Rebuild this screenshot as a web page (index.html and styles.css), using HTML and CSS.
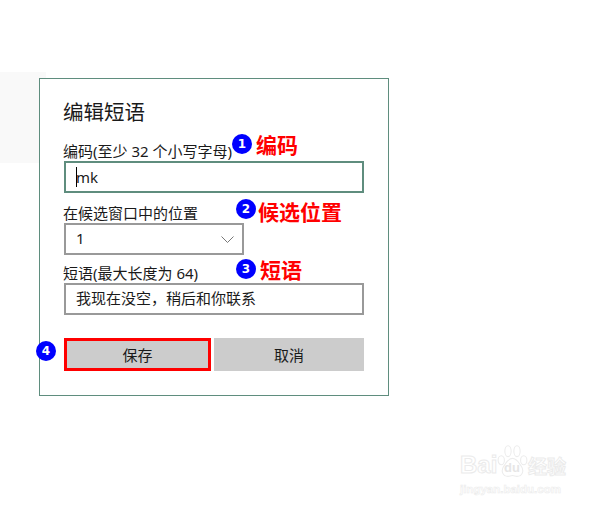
FILE: index.html
```html
<!DOCTYPE html>
<html lang="zh-CN">
<head>
  <meta charset="UTF-8" />
  <title>编辑短语</title>
  <link rel="stylesheet" href="styles.css">
</head>
<body>
  <div class="side-pane"></div>

  <div class="dialog">
    <h1 class="title">编辑短语</h1>

    <label class="label label-code">编码(至少 32 个小写字母)</label>
    <div class="field field-focus"><span class="caret"></span>mk</div>

    <label class="label label-pos">在候选窗口中的位置</label>
    <div class="field select">
      <span>1</span>
      <svg class="chevron" width="13" height="7" viewBox="0 0 13 7"><path d="M0.5 0.5l6 6 6-6" fill="none" stroke="#777" stroke-width="1"/></svg>
    </div>

    <label class="label label-phrase">短语(最大长度为 64)</label>
    <div class="field">我现在没空，稍后和你联系</div>

    <div class="buttons">
      <button class="btn btn-marked">保存</button>
      <button class="btn">取消</button>
    </div>
  </div>

  <!-- 标注 -->
  <span class="badge badge1">1</span>
  <span class="note note1">编码</span>
  <span class="badge badge2">2</span>
  <span class="note note2">候选位置</span>
  <span class="badge badge3">3</span>
  <span class="note note3">短语</span>
  <span class="badge badge4">4</span>

  <!-- 水印 -->
  <div class="watermark">
    <div class="wm-row">
      <span class="wm-bai">Bai</span>
      <svg class="wm-paw" width="31" height="36" viewBox="0 0 34 40">
        <g fill="#fff" stroke="#ececec" stroke-width="1.2">
          <ellipse cx="4.5" cy="18" rx="3.5" ry="5"/>
          <ellipse cx="12" cy="8" rx="3.5" ry="6"/>
          <ellipse cx="22" cy="8" rx="3.5" ry="6"/>
          <ellipse cx="29.5" cy="18" rx="3.5" ry="5"/>
          <path d="M17 16c5 0 7 5 10 9 3 5 1 11-5 11-2 0-3-1-5-1s-3 1-5 1c-6 0-8-6-5-11 3-4 5-9 10-9z"/>
        </g>
      </svg>
      <span class="wm-du">du</span>
      <span class="wm-jy">经验</span>
    </div>
    <div class="wm-url">jingyan.baidu.com</div>
  </div>
</body>
</html>
```

FILE: styles.css
```css
html, body {
  margin: 0;
  padding: 0;
  width: 600px;
  height: 509px;
  overflow: hidden;
  background-color: #fff;
  font-family: "Noto Sans", "Noto Sans CJK SC", sans-serif;
  color: #1a1a1a;
}
body {
  position: relative;
  padding-top: 78px;
  padding-left: 39px;
  box-sizing: border-box;
}
.side-pane {
  position: absolute;
  left: 0;
  top: 72px;
  width: 46px;
  height: 91px;
  background-color: #f9f9f9;
}
.dialog {
  position: relative;
  box-sizing: border-box;
  width: 350px;
  height: 318px;
  border: 1px solid #5f8d7e;
  background-color: #fff;
  padding: 19px 24px 0 24px;
  display: flex;
  flex-direction: column;
  align-items: flex-start;
}
.title {
  margin: 0 0 0 -1px;
  font-size: 20.5px;
  font-weight: 400;
  line-height: 28px;
  height: 28px;
}
.label {
  display: block;
  margin-left: -1px;
  font-size: 15px;
  line-height: 16px;
  height: 18px;
  white-space: nowrap;
}
.label-code { margin-top: 17px; }
.label-pos { margin-top: 12px; }
.label-phrase { margin-top: 10px; }
.field {
  box-sizing: border-box;
  width: 300px;
  height: 32px;
  border: 2px solid #999;
  padding: 0 10px 2px;
  font-size: 15px;
  line-height: 26px;
  display: flex;
  align-items: center;
  white-space: nowrap;
}
.field-focus {
  border-color: #5f8d7e;
  padding-bottom: 0;
}
.caret {
  width: 1px;
  height: 20px;
  background-color: #000;
  margin-right: -1px;
}
.select {
  width: 180px;
  justify-content: space-between;
  padding-right: 8px;
}
.chevron {
  flex: none;
  margin-top: 3px;
}
.buttons {
  display: flex;
  gap: 3px;
  margin-top: 23px;
}
.btn {
  box-sizing: border-box;
  width: 150px;
  height: 33px;
  border: 0;
  padding: 0;
  background-color: #ccc;
  font-family: inherit;
  font-size: 15px;
  color: #1a1a1a;
}
.btn-marked {
  width: 147px;
  border: 3px solid #f00;
}
.badge {
  position: absolute;
  width: 20px;
  height: 20px;
  border-radius: 50%;
  background-color: #00f;
  color: #fff;
  font-family: "DejaVu Sans", sans-serif;
  font-size: 12px;
  font-weight: 700;
  line-height: 20px;
  text-align: center;
}
.badge1 { left: 232px; top: 134px; }
.badge2 { left: 236px; top: 199px; }
.badge3 { left: 236px; top: 259px; }
.badge4 { left: 36px; top: 341px; }
.note {
  position: absolute;
  color: #f00;
  font-family: "Noto Sans CJK SC", sans-serif;
  font-size: 21px;
  font-weight: 700;
  line-height: 26px;
  white-space: nowrap;
}
.note1 { left: 256px; top: 131px; }
.note2 { left: 258px; top: 198px; }
.note3 { left: 260px; top: 256px; }
.watermark {
  position: absolute;
  left: 460px;
  top: 443px;
  width: 120px;
  color: #fff;
  -webkit-text-stroke: 1px #ebebeb;
}
.wm-row {
  position: relative;
  display: flex;
  align-items: flex-end;
  height: 36px;
}
.wm-bai {
  font-family: "Liberation Sans", sans-serif;
  font-size: 24px;
  font-weight: 700;
  line-height: 28px;
  width: 37px;
}
.wm-paw { flex: none; margin-bottom: -1px; }
.wm-du {
  position: absolute;
  left: 44px;
  top: 17px;
  font-family: "Liberation Sans", sans-serif;
  font-size: 13px;
  font-weight: 700;
  -webkit-text-stroke: 0;
  color: #e6e6e6;
}
.wm-jy {
  font-family: "Noto Sans CJK SC", sans-serif;
  font-size: 19px;
  font-weight: 700;
  line-height: 26px;
  white-space: nowrap;
}
.wm-url {
  margin-top: 3px;
  font-family: "Liberation Sans", sans-serif;
  font-size: 11.5px;
  font-weight: 700;
  line-height: 14px;
  -webkit-text-stroke: 0.6px #ececec;
  white-space: nowrap;
}
```
